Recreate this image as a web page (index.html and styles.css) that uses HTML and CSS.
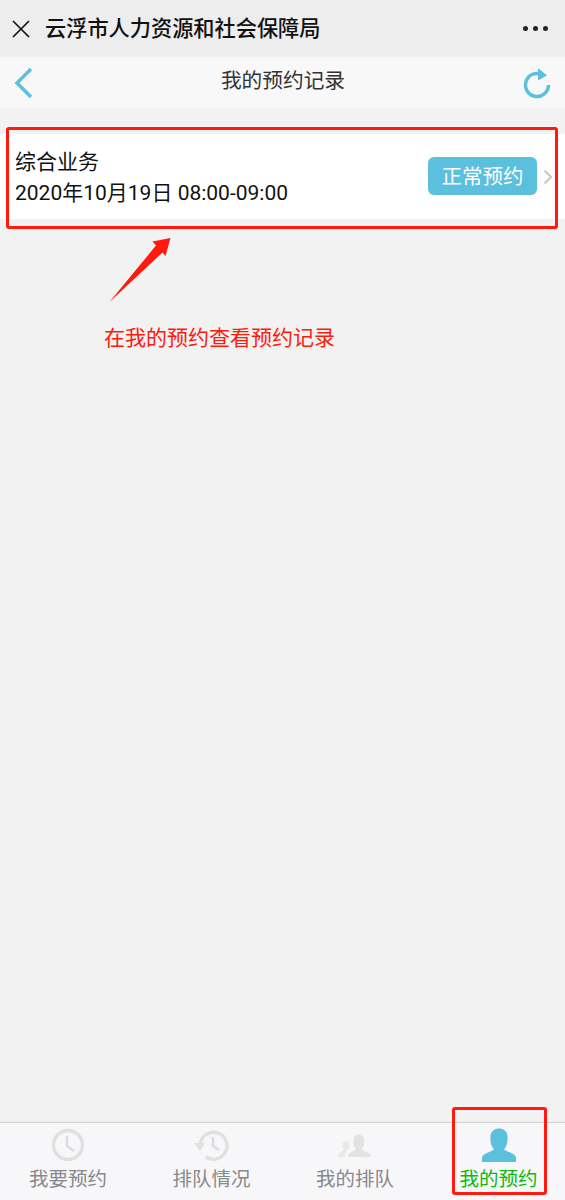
FILE: index.html
```html
<!DOCTYPE html>
<html lang="zh-CN">
<head>
<meta charset="utf-8">
<title>我的预约记录</title>
<link rel="stylesheet" href="styles.css">
</head>
<body>
<div class="app">
  <header class="wx-bar">
    <svg class="wx-close" width="20" height="20" viewBox="0 0 20 20"><path d="M2 2 L18 18 M18 2 L2 18" stroke="#111" stroke-width="1.7" fill="none"/></svg>
    <div class="wx-title">云浮市人力资源和社会保障局</div>
    <div class="wx-more"><i></i><i></i><i></i></div>
  </header>
  <nav class="nav">
    <svg class="nav-back" width="20" height="32" viewBox="0 0 20 32"><path d="M17 2 L3 16 L17 30" stroke="#5bc0de" stroke-width="3.4" fill="none"/></svg>
    <div class="nav-title">我的预约记录</div>
    <svg class="nav-refresh" width="30" height="32" viewBox="0 0 30 32"><path d="M21.5 8.5 A11.5 11.5 0 1 0 26.5 18" stroke="#5bc0de" stroke-width="3.4" fill="none"/><path d="M16 1 L25 8.5 L16 13.5 Z" fill="#5bc0de"/></svg>
  </nav>
  <main class="content">
    <section class="card">
      <div class="card-text">
        <div class="card-name">综合业务</div>
        <div class="card-time">2020年10月19日 08:00-09:00</div>
      </div>
      <div class="badge">正常预约</div>
      <svg class="chev" width="10" height="16" viewBox="0 0 10 16"><path d="M1.5 1.5 L8 8 L1.5 14.5" stroke="#c8c8c8" stroke-width="2.2" fill="none"/></svg>
    </section>
  </main>
  <footer class="tabs">
    <div class="tab">
      <svg class="tab-icon" width="36" height="36" viewBox="0 0 36 36"><circle cx="18" cy="18" r="14.5" stroke="#e0e0e0" stroke-width="3.4" fill="none"/><path d="M17 9 V19 L24 24" stroke="#dcdcdc" stroke-width="2.4" fill="none"/></svg>
      <span>我要预约</span>
    </div>
    <div class="tab">
      <svg class="tab-icon" width="36" height="36" viewBox="0 0 36 36"><path d="M6 19 A13.5 13.5 0 1 1 12 30" stroke="#e0e0e0" stroke-width="3.4" fill="none"/><path d="M0 16 H11 L6 24 Z" fill="#e0e0e0"/><path d="M19 10 V19 L25 23" stroke="#dcdcdc" stroke-width="2.4" fill="none"/></svg>
      <span>排队情况</span>
    </div>
    <div class="tab">
      <svg class="tab-icon" width="36" height="36" viewBox="0 0 36 36"><path d="M1 30 C1 26 4 25 7 23 C5 21 5 18 5.5 16 C6 13 11 13 12 16 C12.5 18 12.5 20 11.500 22 C9 24 8 26 8 30 Z" fill="#e8e8e8"/><path d="M11 30 C11 26 15 25 19 22.500 C16.500 20 16 16 16.500 12 C17 6 26 6 27 12 C27.500 16 27 20 24.500 22.500 C28 25 34 26 34 30 Z" fill="#e2e2e2"/></svg>
      <span>我的排队</span>
    </div>
    <div class="tab tab-active">
      <svg class="tab-icon" width="36" height="36" viewBox="0 0 36 36"><path d="M1 35 V31 C1 27 7 26 13 22.500 C10 19 9 14 9.500 9 C10 -1 26 -1 26.500 9 C27 14 26 19 23 22.500 C29 26 35 27 35 31 V35 Z" fill="#5bc0de"/></svg>
      <span>我的预约</span>
    </div>
  </footer>
  <div class="mark mark-card"></div>
  <svg class="arrow" width="64" height="68" viewBox="0 0 64 68"><path d="M0.500 66 L47 9.500 L43.500 5.500 L61.500 2 L56.500 20 L53.500 16.500 Z" fill="#ff1a0d"/></svg>
  <div class="note">在我的预约查看预约记录</div>
  <div class="mark mark-tab"></div>
</div>
</body>
</html>
```
FILE: styles.css
```css
* { box-sizing: border-box; }
html, body { margin: 0; padding: 0; }
body {
  font-family: Roboto, "Noto Sans CJK SC", sans-serif;
  background: #f2f2f2;
}
.app {
  position: relative;
  width: 565px;
  height: 1200px;
  display: flex;
  flex-direction: column;
  overflow: hidden;
}
.wx-bar {
  height: 57px;
  background: #ededed;
  display: flex;
  align-items: center;
  padding: 0 17px 0 11px;
  flex: none;
}
.wx-close { flex: none; }
.wx-title {
  flex: 1;
  margin-left: 14px;
  font-size: 21.2px;
  line-height: 28px;
  color: #111;
  font-weight: 500;
}
.wx-more { display: flex; gap: 5px; }
.wx-more i {
  display: block;
  width: 5px;
  height: 5px;
  border-radius: 50%;
  background: #222;
}
.nav {
  height: 51px;
  background: #f8f8f8;
  display: flex;
  align-items: center;
  justify-content: space-between;
  padding: 0 13px 0 14px;
  position: relative;
  flex: none;
}
.nav-title {
  position: absolute;
  left: 1px;
  right: 0;
  text-align: center;
  font-size: 20.7px;
  line-height: 28px;
  color: #333;
  margin-top: -3px;
}
.content { flex: 1; padding-top: 26px; }
.card {
  height: 85px;
  background: #fff;
  display: flex;
  align-items: center;
  padding: 0 12px 0 15px;
}
.card-text { flex: 1; color: #111; font-size: 21px; padding-top: 2px; }
.card-name { line-height: 30px; }
.card-time { line-height: 31px; margin-top: 1px; }
.badge {
  width: 109px;
  height: 38px;
  background: #5bc0de;
  border-radius: 6px;
  color: #fff;
  font-size: 20.5px;
  line-height: 41px;
  text-align: center;
  margin-top: -1px;
}
.chev { margin-left: 6px; flex: none; }
.tabs {
  height: 78px;
  flex: none;
  background: #f7f7fa;
  border-top: 1px solid #cfcfcf;
  display: flex;
  gap: 43.5px;
  padding-left: 18px;
}
.tab {
  width: 100px;
  flex: none;
  display: flex;
  flex-direction: column;
  align-items: center;
  padding-top: 4px;
  color: #888;
  font-size: 19.5px;
}
.tab span { line-height: 28px; margin-top: 3px; }
.tab-icon { flex: none; }
.tab-active { color: #09bb07; }
.mark {
  position: absolute;
  border: 3px solid #ff1a0d;
  border-radius: 3px;
}
.mark-card { left: 6px; top: 127px; width: 552px; height: 102px; }
.mark-tab { left: 452px; top: 1107px; width: 95px; height: 88px; }
.arrow { position: absolute; left: 109px; top: 236px; }
.note {
  position: absolute;
  left: 104px;
  top: 324px;
  font-size: 21px;
  line-height: 28px;
  color: #ff1a0d;
}
```
